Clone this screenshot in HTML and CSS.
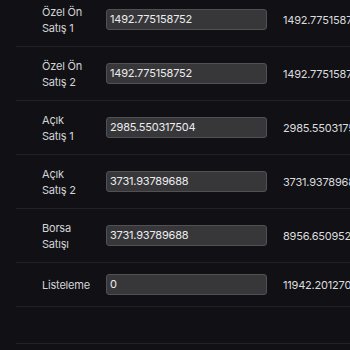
FILE: index.html
```html
<!DOCTYPE html>
<html lang="tr">
<head>
<meta charset="utf-8">
<link rel="stylesheet" href="styles.css">
</head>
<body>
<div class="table">
  <div class="row">
    <div class="label">Özel Ön Satış 1</div>
    <div class="cell"><div class="input">1492.775158752</div></div>
    <div class="value">1492.775158752</div>
  </div>
  <div class="row">
    <div class="label">Özel Ön Satış 2</div>
    <div class="cell"><div class="input">1492.775158752</div></div>
    <div class="value">1492.775158752</div>
  </div>
  <div class="row">
    <div class="label">Açık Satış 1</div>
    <div class="cell"><div class="input">2985.550317504</div></div>
    <div class="value">2985.550317504</div>
  </div>
  <div class="row">
    <div class="label">Açık Satış 2</div>
    <div class="cell"><div class="input">3731.93789688</div></div>
    <div class="value">3731.93789688</div>
  </div>
  <div class="row">
    <div class="label">Borsa Satışı</div>
    <div class="cell"><div class="input">3731.93789688</div></div>
    <div class="value">8956.650952512</div>
  </div>
  <div class="row short">
    <div class="label">Listeleme</div>
    <div class="cell"><div class="input">0</div></div>
    <div class="value">11942.201270016</div>
  </div>
  <div class="row empty"></div>
</div>
</body>
</html>
```
FILE: styles.css
```css
html, body {
  margin: 0;
  padding: 0;
  background: #111115;
  overflow: hidden;
}
body {
  font-family: Inter, "Liberation Sans", sans-serif;
  font-size: 11px;
  letter-spacing: -0.2px;
  color: #d4d4d7;
  width: 350px;
  height: 350px;
}
.table {
  margin-top: -7px;
  margin-left: 16px;
  width: 400px;
}
.row {
  display: grid;
  grid-template-columns: 90px 177px auto;
  align-items: center;
  box-sizing: border-box;
  height: 54px;
  border-bottom: 1px solid #222226;
  white-space: nowrap;
}
.row.short { height: 44px; }
.row.empty { height: 37px; }
.label {
  padding-left: 26px;
  width: 44px;
  white-space: normal;
  line-height: 16px;
}
.input {
  width: 161px;
  height: 21px;
  box-sizing: border-box;
  background: #37373a;
  border: 1px solid #515155;
  border-radius: 3px;
  padding-left: 3px;
  line-height: 19px;
  color: #ececee;
  overflow: hidden;
}
.value {
  color: #dcdcde;
}
```
